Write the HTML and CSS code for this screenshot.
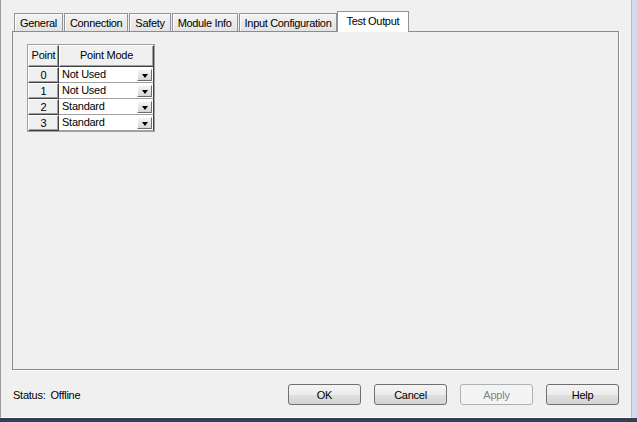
FILE: index.html
```html
<!DOCTYPE html>
<html>
<head>
<meta charset="utf-8">
<link rel="stylesheet" href="styles.css">
</head>
<body>
<div class="screen">
  <div class="main">
    <div class="dialog">
      <div class="tabs">
        <div class="tab">General</div>
        <div class="tab">Connection</div>
        <div class="tab">Safety</div>
        <div class="tab">Module Info</div>
        <div class="tab">Input Configuration</div>
        <div class="tab active">Test Output</div>
      </div>
      <div class="panel">
        <div class="grid">
          <div class="hcell">Point</div>
          <div class="hcell">Point Mode</div>
          <div class="num">0</div>
          <div class="mode"><span>Not Used</span><span class="drop"><i></i></span></div>
          <div class="num">1</div>
          <div class="mode"><span>Not Used</span><span class="drop"><i></i></span></div>
          <div class="num">2</div>
          <div class="mode"><span>Standard</span><span class="drop"><i></i></span></div>
          <div class="num">3</div>
          <div class="mode"><span>Standard</span><span class="drop"><i></i></span></div>
        </div>
      </div>
      <div class="footer">
        <div class="status"><span class="label">Status:</span><span>Offline</span></div>
        <div class="buttons">
          <button class="btn">OK</button>
          <button class="btn">Cancel</button>
          <button class="btn disabled">Apply</button>
          <button class="btn">Help</button>
        </div>
      </div>
    </div>
    <div class="edge"></div>
  </div>
  <div class="taskbar"></div>
</div>
</body>
</html>
```

FILE: styles.css
```css
html, body {
  margin: 0;
  padding: 0;
}
body {
  width: 637px;
  height: 422px;
  overflow: hidden;
  background: #f0f0f0;
  font-family: "Liberation Sans", Arial, sans-serif;
  font-size: 11px;
  letter-spacing: -0.25px;
  color: #000;
}
.screen {
  display: flex;
  flex-direction: column;
  height: 422px;
}
.main {
  display: flex;
  height: 418px;
}
.dialog {
  width: 632px;
  box-sizing: border-box;
  border-left: 1px solid #9a9a9a;
  border-right: 1px solid #b8bcc2;
  border-bottom: 1px solid #fafafa;
  padding: 11px 0 0 11px;
  display: flex;
  flex-direction: column;
}
.edge {
  width: 5px;
  background: #d3dcea;
}
.taskbar {
  height: 4px;
  background: #323f55;
}
.tabs {
  display: flex;
  align-items: flex-end;
  height: 20px;
  padding-left: 2px;
  position: relative;
  z-index: 1;
}
.tab {
  height: 18px;
  box-sizing: border-box;
  border: 1px solid #8f929a;
  border-bottom: none;
  box-shadow: inset 1px 1px 0 #fdfdfd;
  padding: 0 5px;
  line-height: 18px;
  letter-spacing: -0.32px;
  background: linear-gradient(#f3f3f3, #e3e3e3);
  margin-right: 1px;
  white-space: nowrap;
}
.tab.active {
  height: 21px;
  margin-bottom: -1px;
  margin-left: -1px;
  background: #fff;
  box-shadow: none;
  line-height: 19px;
  padding: 0 9px 0 8px;
}
.panel {
  width: 607px;
  height: 339px;
  box-sizing: border-box;
  border: 1px solid #898c95;
  box-shadow: 1px 1px 0 #fff;
  padding: 12px 0 0 14px;
}
.grid {
  display: inline-grid;
  grid-template-columns: 31px 95px;
  grid-template-rows: 22px repeat(4, 16px);
  border: 1px solid #a0a0a0;
  background: #fff;
}
.hcell, .num {
  box-sizing: border-box;
  background: #f0f0f0;
  border-top: 1px solid #fff;
  border-left: 1px solid #fff;
  border-right: 1px solid #404040;
  border-bottom: 1px solid #404040;
  box-shadow: inset -1px -1px 0 #a0a0a0;
  text-align: center;
}
.hcell {
  line-height: 19px;
}
.num {
  line-height: 15px;
}
.mode {
  box-sizing: border-box;
  border-bottom: 1px solid #a0a0a0;
  border-right: 1px solid #404040;
  padding: 0 1px 0 3px;
  display: flex;
  justify-content: space-between;
  align-items: center;
  line-height: 15px;
}
.drop {
  width: 15px;
  height: 12px;
  box-sizing: border-box;
  align-self: flex-end;
  margin-bottom: 1px;
  border-top: 1px solid #fff;
  border-left: 1px solid #fff;
  border-right: 1px solid #6d6d6d;
  border-bottom: 1px solid #6d6d6d;
  background: linear-gradient(#f4f4f4, #d6d6d6);
  display: flex;
  justify-content: center;
  align-items: flex-end;
  padding-bottom: 2px;
}
.drop i {
  width: 0;
  height: 0;
  border-left: 3px solid transparent;
  border-right: 3px solid transparent;
  border-top: 4px solid #000;
}
.footer {
  width: 607px;
  margin-top: 14px;
  display: flex;
  align-items: center;
}
.status {
  display: flex;
  margin-left: 1px;
}
.status .label {
  margin-right: 5px;
}
.buttons {
  margin-left: auto;
  display: flex;
  gap: 13px;
}
.btn {
  width: 73px;
  height: 21px;
  box-sizing: border-box;
  border: 1px solid #707070;
  border-radius: 3px;
  background: linear-gradient(#f4f4f4 0%, #ececec 50%, #dfdfdf 51%, #d4d4d4 100%);
  font-family: inherit;
  font-size: 11px;
  letter-spacing: -0.25px;
  color: #000;
  padding: 0;
  margin: 0;
}
.btn.disabled {
  border-color: #adb2b5;
  background: #f4f4f4;
  color: #838383;
}
```
